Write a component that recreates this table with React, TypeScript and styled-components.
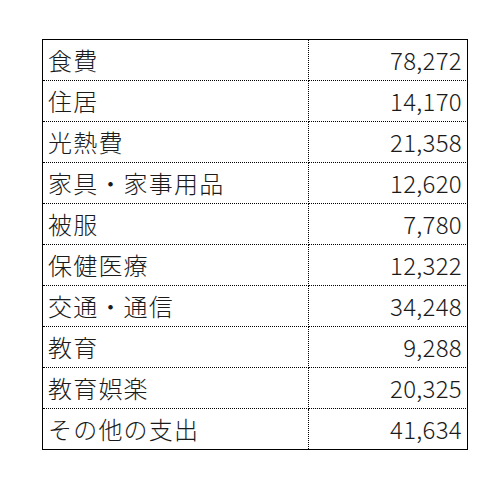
import React from "react";
import styled, { createGlobalStyle } from "styled-components";

const Global = createGlobalStyle`
  html, body { margin: 0; padding: 0; background: #ffffff; }
  body { font-family: "Noto Sans CJK JP", "Noto Sans", sans-serif; }
`;

const Page = styled.div`
  padding: 39px 0 0 42px;
`;

const Table = styled.div`
  display: grid;
  grid-template-columns: 265px 158px;
  width: 424px;
  border: 1px solid #000;
`;

const Cell = styled.div<{ $num?: boolean; $last?: boolean }>`
  height: 40px;
  line-height: 40px;
  font-size: 24px;
  font-weight: 300;
  color: #1a1a1a;
  white-space: nowrap;
  overflow: hidden;
  padding: ${(p) => (p.$num ? "0 4px 0 0" : "0 0 0 5px")};
  letter-spacing: ${(p) => (p.$num ? "0.3px" : "1.2px")};
  text-align: ${(p) => (p.$num ? "right" : "left")};
  border-bottom: ${(p) => (p.$last ? "none" : "1px dotted #000")};
  border-right: ${(p) => (p.$num ? "none" : "1px dotted #000")};
  box-sizing: content-box;
`;

const LabelCell = styled(Cell)`
  width: 260px;
`;

const NumCell = styled(Cell)`
  width: 154px;
`;

const rows: [string, string][] = [
  ["食費", "78,272"],
  ["住居", "14,170"],
  ["光熱費", "21,358"],
  ["家具・家事用品", "12,620"],
  ["被服", "7,780"],
  ["保健医療", "12,322"],
  ["交通・通信", "34,248"],
  ["教育", "9,288"],
  ["教育娯楽", "20,325"],
  ["その他の支出", "41,634"],
];

export default function App() {
  return (
    <>
      <Global />
      <Page>
        <Table>
          {rows.map(([label, value], i) => (
            <React.Fragment key={label}>
              <LabelCell $last={i === rows.length - 1}>{label}</LabelCell>
              <NumCell $num $last={i === rows.length - 1}>
                {value}
              </NumCell>
            </React.Fragment>
          ))}
        </Table>
      </Page>
    </>
  );
}
